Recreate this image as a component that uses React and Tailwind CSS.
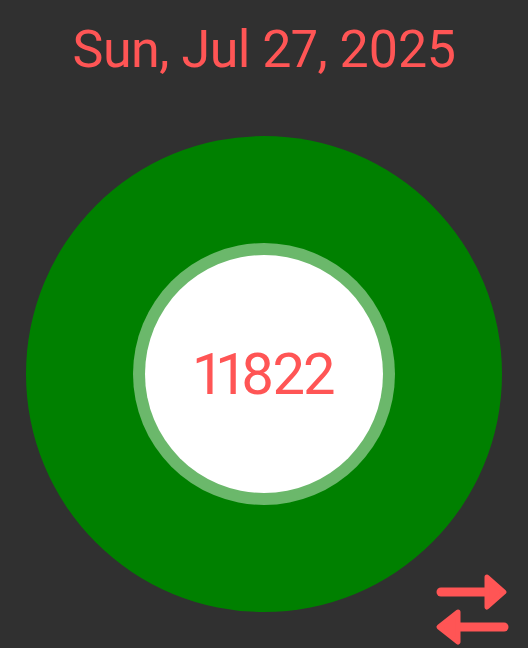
function SwapIcon() {
  return (
    <svg width="80" height="80" viewBox="0 0 80 80" className="absolute left-[432px] top-[568px]">
      <g fill="#ff5555" stroke="#ff5555" strokeLinecap="round" strokeLinejoin="round">
        <line x1="9" y1="24" x2="56" y2="24" strokeWidth="9" />
        <polygon points="55,9 72,24 55,39" strokeWidth="5" />
        <line x1="72" y1="59" x2="25" y2="59" strokeWidth="9" />
        <polygon points="26,44 7,59 26,74" strokeWidth="5" />
      </g>
    </svg>
  );
}

export default function App() {
  return (
    <div className="relative w-[528px] h-[648px] bg-[#303030] overflow-hidden font-[Roboto,sans-serif] proportional-nums text-[#ff5555]">
      <div className="pt-[24px] text-center text-[52px] leading-none tracking-[-0.5px]">Sun, Jul 27, 2025</div>
      <div className="mt-[60px] mx-auto w-[476px] h-[476px] rounded-full bg-[#008000] flex items-center justify-center">
        <div className="w-[262px] h-[262px] rounded-full bg-[#6bb86b] flex items-center justify-center">
          <div className="w-[238px] h-[238px] rounded-full bg-white flex items-center justify-center text-[58px] leading-none tracking-[-2px]">
            11822
          </div>
        </div>
      </div>
      <SwapIcon />
    </div>
  );
}
